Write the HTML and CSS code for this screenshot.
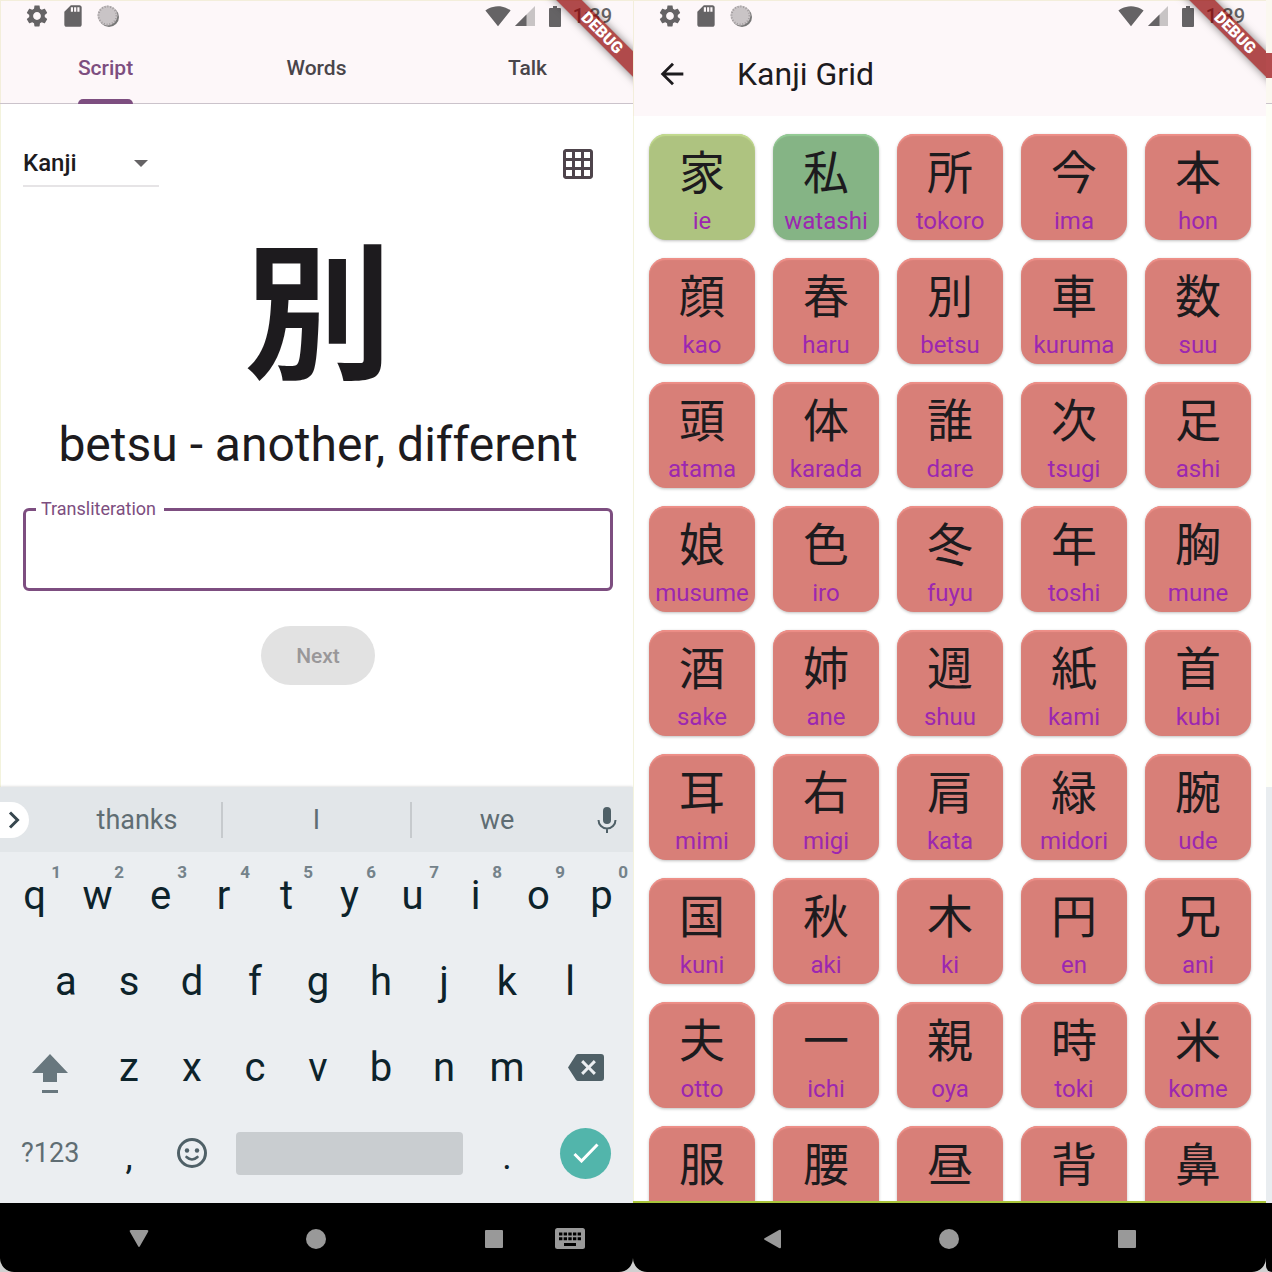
FILE: index.html
```html
<!DOCTYPE html>
<html lang="en">
<head>
<meta charset="utf-8">
<title>Kanji Practice</title>
<link rel="stylesheet" href="styles.css">
</head>
<body>
<svg class="sprite" aria-hidden="true">
  <symbol id="gear" viewBox="0 0 24 24"><path d="M19.14 12.94c.04-.3.06-.61.06-.94 0-.32-.02-.64-.07-.94l2.03-1.58c.18-.14.23-.41.12-.61l-1.92-3.32c-.12-.22-.37-.29-.59-.22l-2.39.96c-.5-.38-1.03-.7-1.62-.94l-.36-2.54c-.04-.24-.24-.41-.48-.41h-3.84c-.24 0-.43.17-.47.41l-.36 2.54c-.59.24-1.13.57-1.62.94l-2.39-.96c-.22-.08-.47 0-.59.22L2.74 8.87c-.12.21-.08.47.12.61l2.03 1.58c-.05.3-.09.63-.09.94s.02.64.07.94l-2.03 1.58c-.18.14-.23.41-.12.61l1.92 3.32c.12.22.37.29.59.22l2.39-.96c.5.38 1.03.7 1.62.94l.36 2.54c.05.24.24.41.48.41h3.84c.24 0 .44-.17.47-.41l.36-2.54c.59-.24 1.13-.56 1.62-.94l2.39.96c.22.08.47 0 .59-.22l1.92-3.32c.12-.22.07-.47-.12-.61l-2.01-1.58zM12 15.6c-1.98 0-3.6-1.62-3.6-3.6s1.620-3.6 3.6-3.6 3.6 1.620 3.6 3.6-1.62 3.6-3.6 3.6z"/></symbol>
  <symbol id="sd" viewBox="0 0 24 24"><path d="M18 2h-8L4 8v12c0 1.100.9 2 2 2h12c1.100 0 2-.9 2-2V4c0-1.100-.9-2-2-2zm-6 6h-2V4h2v4zm3 0h-2V4h2v4zm3 0h-2V4h2v4z"/></symbol>
  <symbol id="sync" viewBox="0 0 24 24"><circle cx="13" cy="13" r="10" fill="#777"/><circle cx="11.500" cy="11.500" r="10" fill="#c9c4c6"/><circle cx="11.500" cy="11.500" r="9" fill="none" stroke="#a09b9d" stroke-width="2" stroke-dasharray="1 1.800"/></symbol>
  <symbol id="wifi" viewBox="0 0 24 24"><path d="M12.010 21.490L23.640 7c-.45-.34-4.930-4-11.640-4C5.280 3 .81 6.660.36 7l11.630 14.490.010.010.010-.010z"/></symbol>
  <symbol id="signal" viewBox="0 0 20 20"><path opacity=".35" d="M20 0 0 20h20z"/><path d="M11.500 8.500 0 20h11.500z"/></symbol>
  <symbol id="battery" viewBox="0 0 12 21"><path d="M4 0h4v2h3q1 0 1 1v17q0 1-1 1H1q-1 0-1-1V3q0-1 1-1h3z"/></symbol>
  <symbol id="grid" viewBox="0 0 24 24"><path d="M20 2H4c-1.100 0-2 .9-2 2v16c0 1.100.9 2 2 2h16c1.100 0 2-.9 2-2V4c0-1.100-.9-2-2-2zM8 20H4v-4h4v4zm0-6H4v-4h4v4zm0-6H4V4h4v4zm6 12h-4v-4h4v4zm0-6h-4v-4h4v4zm0-6h-4V4h4v4zm6 12h-4v-4h4v4zm0-6h-4v-4h4v4zm0-6h-4V4h4v4z"/></symbol>
  <symbol id="back" viewBox="0 0 24 24"><path d="M20 11H7.830l5.590-5.590L12 4l-8 8 8 8 1.410-1.410L7.830 13H20v-2z"/></symbol>
  <symbol id="mic" viewBox="0 0 20 28"><rect x="6" y="1" width="8" height="17" rx="4"/><path d="M1.500 14a8.500 8.500 0 0 0 17 0M10 22v5" fill="none" stroke="currentColor" stroke-width="2"/></symbol>
  <symbol id="shift" viewBox="0 0 36 40"><path d="M18 0 0 19h11v9h14v-9h11zM10 36h16v3H10z"/></symbol>
  <symbol id="erase" viewBox="0 0 36 27"><path fill-rule="evenodd" d="M10 0h23q3 0 3 3v21q0 3-3 3H10q-1 0-2-1L0 13.500 8 1q1-1 2-1zm3.100 8.200 5.200 5.300-5.200 5.300 2.100 2.100 5.300-5.300 5.300 5.300 2.100-2.100-5.300-5.300 5.300-5.300-2.100-2.100-5.300 5.300-5.300-5.300z"/></symbol>
  <symbol id="smile" viewBox="0 0 30 30"><circle cx="15" cy="15" r="13.500" fill="none" stroke="currentColor" stroke-width="3"/><circle cx="10" cy="12.500" r="2.200"/><circle cx="20" cy="12.500" r="2.200"/><path d="M9.500 19q5.500 5 11 0" fill="none" stroke="currentColor" stroke-width="2.600" stroke-linecap="round"/></symbol>
  <symbol id="check" viewBox="0 0 26 20"><path d="M1.500 11 8.500 18 24.500 1.500" fill="none" stroke="#fff" stroke-width="3"/></symbol>
  <symbol id="chevron" viewBox="0 0 12 18"><path d="M2 1.500 9.500 9 2 16.500" fill="none" stroke="currentColor" stroke-width="3"/></symbol>
  <symbol id="nav-down" viewBox="0 0 20 18"><path d="M2 0h16q2 0 1 2l-8 14q-1 2-2 0L1 2Q0 0 2 0z"/></symbol>
  <symbol id="nav-back" viewBox="0 0 18 20"><path d="M18 2v16q0 2-2 1L2 11q-2-1 0-2L16 1q2-1 2 1z"/></symbol>
  <symbol id="nav-home" viewBox="0 0 20 20"><circle cx="10" cy="10" r="10"/></symbol>
  <symbol id="nav-recent" viewBox="0 0 18 18"><rect width="18" height="18" rx="1"/></symbol>
  <symbol id="nav-keys" viewBox="0 0 30 21"><rect width="30" height="21" rx="2.500"/><path d="M4 6h22M4 10.700h22" stroke="#000" stroke-width="3" stroke-dasharray="3.400 1.250"/><path d="M9 16.500h12" stroke="#000" stroke-width="3"/></symbol>
</svg>

<main class="screens">
  <section class="phone" aria-label="Script practice">
    <header class="app-top">
      <div class="status">
        <svg class="status-icon"><use href="#gear"/></svg>
        <svg class="status-icon"><use href="#sd"/></svg>
        <svg class="status-dot"><use href="#sync"/></svg>
        <span class="spacer"></span>
        <svg class="status-wifi"><use href="#wifi"/></svg>
        <svg class="status-signal"><use href="#signal"/></svg>
        <svg class="status-battery"><use href="#battery"/></svg>
        <span class="clock">1:39</span>
      </div>
      <nav class="tabs">
        <a class="tab tab-active" href="#script">Script</a>
        <a class="tab" href="#words">Words</a>
        <a class="tab" href="#talk">Talk</a>
      </nav>
    </header>
    <div class="ribbon">DEBUG</div>

    <div class="practice" id="script">
      <div class="toolbar">
        <div class="picker">
          <select class="picker-select" aria-label="Script type"><option>Kanji</option><option>Kana</option></select>
          <span class="picker-arrow"></span>
        </div>
        <button class="icon-button" aria-label="Show grid"><svg class="grid-icon"><use href="#grid"/></svg></button>
      </div>
      <div class="glyph" lang="ja">別</div>
      <p class="meaning">betsu - another, different</p>
      <div class="field">
        <input class="field-input" id="answer" type="text">
        <label class="field-label" for="answer">Transliteration</label>
      </div>
      <button class="next" disabled>Next</button>
    </div>

    <div class="keyboard">
      <div class="suggestions">
        <button class="expand" aria-label="More"><svg class="chevron"><use href="#chevron"/></svg></button>
        <button class="suggestion">thanks</button>
        <button class="suggestion">I</button>
        <button class="suggestion">we</button>
        <button class="mic" aria-label="Voice input"><svg class="mic-icon"><use href="#mic"/></svg></button>
      </div>
      <div class="keys">
        <div class="key-row">
          <button class="key">q<sup class="hint">1</sup></button><button class="key">w<sup class="hint">2</sup></button><button class="key">e<sup class="hint">3</sup></button><button class="key">r<sup class="hint">4</sup></button><button class="key">t<sup class="hint">5</sup></button><button class="key">y<sup class="hint">6</sup></button><button class="key">u<sup class="hint">7</sup></button><button class="key">i<sup class="hint">8</sup></button><button class="key">o<sup class="hint">9</sup></button><button class="key">p<sup class="hint">0</sup></button>
        </div>
        <div class="key-row key-row-inset">
          <button class="key">a</button><button class="key">s</button><button class="key">d</button><button class="key">f</button><button class="key">g</button><button class="key">h</button><button class="key">j</button><button class="key">k</button><button class="key">l</button>
        </div>
        <div class="key-row">
          <button class="key key-wide" aria-label="Shift"><svg class="shift-icon"><use href="#shift"/></svg></button>
          <button class="key">z</button><button class="key">x</button><button class="key">c</button><button class="key">v</button><button class="key">b</button><button class="key">n</button><button class="key">m</button>
          <button class="key key-wide key-muted" aria-label="Backspace"><svg class="erase-icon"><use href="#erase"/></svg></button>
        </div>
        <div class="key-row">
          <button class="key key-wide key-symbols">?123</button>
          <button class="key key-mark">,</button>
          <button class="key key-muted" aria-label="Emoji"><svg class="smile-icon"><use href="#smile"/></svg></button>
          <button class="key key-space" aria-label="Space"><span class="space-bar"></span></button>
          <button class="key key-mark">.</button>
          <button class="key key-wide" aria-label="Done"><span class="done"><svg class="check-icon"><use href="#check"/></svg></span></button>
        </div>
      </div>
    </div>

    <footer class="system-nav">
      <button class="nav-button nav-first" aria-label="Hide keyboard"><svg class="nav-down"><use href="#nav-down"/></svg></button>
      <button class="nav-button nav-second" aria-label="Home"><svg class="nav-home"><use href="#nav-home"/></svg></button>
      <button class="nav-button nav-third" aria-label="Recent apps"><svg class="nav-recent"><use href="#nav-recent"/></svg></button>
      <button class="nav-button nav-fourth" aria-label="Switch keyboard"><svg class="nav-keys"><use href="#nav-keys"/></svg></button>
    </footer>
  </section>

  <section class="phone" aria-label="Kanji grid">
    <header class="app-top app-top-plain">
      <div class="status">
        <svg class="status-icon"><use href="#gear"/></svg>
        <svg class="status-icon"><use href="#sd"/></svg>
        <svg class="status-dot"><use href="#sync"/></svg>
        <span class="spacer"></span>
        <svg class="status-wifi"><use href="#wifi"/></svg>
        <svg class="status-signal"><use href="#signal"/></svg>
        <svg class="status-battery"><use href="#battery"/></svg>
        <span class="clock">1:39</span>
      </div>
      <div class="title-bar">
        <button class="icon-button" aria-label="Back"><svg class="back-icon"><use href="#back"/></svg></button>
        <h1 class="title">Kanji Grid</h1>
      </div>
    </header>
    <div class="ribbon">DEBUG</div>

    <ul class="cards">
      <li class="card card-good"><span class="kanji" lang="ja">家</span><span class="romaji">ie</span></li>
      <li class="card card-best"><span class="kanji" lang="ja">私</span><span class="romaji">watashi</span></li>
      <li class="card"><span class="kanji" lang="ja">所</span><span class="romaji">tokoro</span></li>
      <li class="card"><span class="kanji" lang="ja">今</span><span class="romaji">ima</span></li>
      <li class="card"><span class="kanji" lang="ja">本</span><span class="romaji">hon</span></li>
      <li class="card"><span class="kanji" lang="ja">顔</span><span class="romaji">kao</span></li>
      <li class="card"><span class="kanji" lang="ja">春</span><span class="romaji">haru</span></li>
      <li class="card"><span class="kanji" lang="ja">別</span><span class="romaji">betsu</span></li>
      <li class="card"><span class="kanji" lang="ja">車</span><span class="romaji">kuruma</span></li>
      <li class="card"><span class="kanji" lang="ja">数</span><span class="romaji">suu</span></li>
      <li class="card"><span class="kanji" lang="ja">頭</span><span class="romaji">atama</span></li>
      <li class="card"><span class="kanji" lang="ja">体</span><span class="romaji">karada</span></li>
      <li class="card"><span class="kanji" lang="ja">誰</span><span class="romaji">dare</span></li>
      <li class="card"><span class="kanji" lang="ja">次</span><span class="romaji">tsugi</span></li>
      <li class="card"><span class="kanji" lang="ja">足</span><span class="romaji">ashi</span></li>
      <li class="card"><span class="kanji" lang="ja">娘</span><span class="romaji">musume</span></li>
      <li class="card"><span class="kanji" lang="ja">色</span><span class="romaji">iro</span></li>
      <li class="card"><span class="kanji" lang="ja">冬</span><span class="romaji">fuyu</span></li>
      <li class="card"><span class="kanji" lang="ja">年</span><span class="romaji">toshi</span></li>
      <li class="card"><span class="kanji" lang="ja">胸</span><span class="romaji">mune</span></li>
      <li class="card"><span class="kanji" lang="ja">酒</span><span class="romaji">sake</span></li>
      <li class="card"><span class="kanji" lang="ja">姉</span><span class="romaji">ane</span></li>
      <li class="card"><span class="kanji" lang="ja">週</span><span class="romaji">shuu</span></li>
      <li class="card"><span class="kanji" lang="ja">紙</span><span class="romaji">kami</span></li>
      <li class="card"><span class="kanji" lang="ja">首</span><span class="romaji">kubi</span></li>
      <li class="card"><span class="kanji" lang="ja">耳</span><span class="romaji">mimi</span></li>
      <li class="card"><span class="kanji" lang="ja">右</span><span class="romaji">migi</span></li>
      <li class="card"><span class="kanji" lang="ja">肩</span><span class="romaji">kata</span></li>
      <li class="card"><span class="kanji" lang="ja">緑</span><span class="romaji">midori</span></li>
      <li class="card"><span class="kanji" lang="ja">腕</span><span class="romaji">ude</span></li>
      <li class="card"><span class="kanji" lang="ja">国</span><span class="romaji">kuni</span></li>
      <li class="card"><span class="kanji" lang="ja">秋</span><span class="romaji">aki</span></li>
      <li class="card"><span class="kanji" lang="ja">木</span><span class="romaji">ki</span></li>
      <li class="card"><span class="kanji" lang="ja">円</span><span class="romaji">en</span></li>
      <li class="card"><span class="kanji" lang="ja">兄</span><span class="romaji">ani</span></li>
      <li class="card"><span class="kanji" lang="ja">夫</span><span class="romaji">otto</span></li>
      <li class="card"><span class="kanji" lang="ja">一</span><span class="romaji">ichi</span></li>
      <li class="card"><span class="kanji" lang="ja">親</span><span class="romaji">oya</span></li>
      <li class="card"><span class="kanji" lang="ja">時</span><span class="romaji">toki</span></li>
      <li class="card"><span class="kanji" lang="ja">米</span><span class="romaji">kome</span></li>
      <li class="card"><span class="kanji" lang="ja">服</span></li>
      <li class="card"><span class="kanji" lang="ja">腰</span></li>
      <li class="card"><span class="kanji" lang="ja">昼</span></li>
      <li class="card"><span class="kanji" lang="ja">背</span></li>
      <li class="card"><span class="kanji" lang="ja">鼻</span></li>
    </ul>

    <footer class="system-nav">
      <button class="nav-button nav-first" aria-label="Back"><svg class="nav-back"><use href="#nav-back"/></svg></button>
      <button class="nav-button nav-second" aria-label="Home"><svg class="nav-home"><use href="#nav-home"/></svg></button>
      <button class="nav-button nav-third" aria-label="Recent apps"><svg class="nav-recent"><use href="#nav-recent"/></svg></button>
    </footer>
  </section>

  <div class="edge" aria-hidden="true">
    <div class="edge-top"><span class="edge-ribbon"></span></div>
    <div class="edge-body"></div>
    <div class="edge-keys"></div>
    <div class="edge-nav"></div>
  </div>
</main>
</body>
</html>
```

FILE: styles.css
```css
* { box-sizing: border-box; }

body {
  margin: 0;
  background: #d0d0d0;
  color: #1d1b1e;
  font-family: Roboto, "Noto Sans CJK JP", sans-serif;
}

button {
  padding: 0;
  border: 0;
  background: none;
  color: inherit;
  font: inherit;
}

svg { display: block; fill: currentColor; }

.sprite { position: absolute; width: 0; height: 0; }

.screens {
  display: grid;
  grid-template-columns: minmax(0, 1fr) minmax(0, 1fr) 6px;
  height: 100vh;
}

.phone {
  position: relative;
  display: flex;
  flex-direction: column;
  min-height: 0;
  overflow: hidden;
  background: #fff;
  border-radius: 0 0 14px 14px;
  box-shadow: inset 1px 0 #f3f3dd;
}

/* Status bar */
.app-top {
  background: #fdf7f9;
  border-bottom: 1px solid #cbc3cb;
  box-shadow: inset 1px 1px #f3eedb;
}

.app-top-plain { border-bottom: 0; }

.status {
  display: flex;
  align-items: center;
  height: 32px;
  padding: 0 21px 0 24px;
  color: #656365;
}

.status-icon { width: 26px; height: 26px; margin-right: 10px; }
.status-dot { width: 24px; height: 24px; }
.spacer { flex: 1; }
.status-wifi { width: 26px; height: 26px; margin-right: 4px; }
.status-signal { width: 20px; height: 20px; margin-right: 14px; }
.status-battery { width: 12px; height: 21px; margin-right: 12px; }

.clock {
  font-size: 20px;
  line-height: 32px;
  font-weight: 500;
}

/* Debug ribbon across the corner */
.ribbon {
  position: absolute;
  top: 24px;
  right: -49px;
  width: 160px;
  height: 18px;
  background: rgba(143, 0, 2, .7);
  box-shadow: 0 0 9px rgba(0, 0, 0, .5);
  color: #fff;
  font-size: 16px;
  line-height: 18px;
  font-weight: 900;
  text-align: center;
  transform: rotate(45deg);
}

/* Tabs */
.tabs {
  display: grid;
  grid-template-columns: repeat(3, 1fr);
  justify-items: center;
}

.tab {
  height: 71px;
  padding-top: 22px;
  color: #49454a;
  font-size: 21px;
  line-height: 28px;
  font-weight: 500;
  text-decoration: none;
}

.tab-active {
  position: relative;
  color: #7d4e80;
}

.tab-active::after {
  content: "";
  position: absolute;
  right: 0;
  bottom: -1px;
  left: 0;
  height: 5px;
  border-radius: 5px 5px 0 0;
  background: #7d4e80;
}

/* Practice area */
.practice {
  display: flex;
  flex: 1;
  flex-direction: column;
  align-items: center;
  min-height: 0;
  padding: 36px 20px 0 23px;
}

.toolbar {
  display: flex;
  align-self: stretch;
  justify-content: space-between;
  align-items: center;
  height: 47px;
}

.picker {
  position: relative;
  width: 136px;
  border-bottom: 2px solid #e6e4e6;
}

.picker-select {
  width: 100%;
  height: 45px;
  padding: 1px 0 0;
  border: 0;
  appearance: none;
  background: none;
  color: #1d1b1e;
  font: 500 24px/44px Roboto, sans-serif;
}

.picker-arrow {
  position: absolute;
  top: 20px;
  right: 11px;
  border: 7px solid transparent;
  border-top-color: #656365;
  border-bottom: 0;
}

.icon-button { display: flex; color: #1d1b1e; }

.grid-icon {
  width: 36px;
  height: 36px;
  margin-right: 17px;
  color: #4e444b;
}

.glyph {
  margin-top: 18px;
  font-family: "Noto Sans CJK JP", sans-serif;
  font-size: 148px;
  line-height: 196px;
  font-weight: 700;
}

.meaning {
  margin: 14px 0 0;
  font-size: 48px;
  line-height: 60px;
  white-space: nowrap;
}

.field {
  position: relative;
  align-self: stretch;
  margin-top: 33px;
}

.field-input {
  display: block;
  width: 100%;
  height: 83px;
  padding: 0 20px;
  border: 3px solid #7d4e80;
  border-radius: 6px;
  outline: 0;
  background: none;
  font: 24px Roboto, sans-serif;
}

.field-label {
  position: absolute;
  top: -10px;
  left: 13px;
  padding: 0 8px 0 5px;
  background: #fff;
  color: #7d4e80;
  font-size: 18px;
  line-height: 22px;
}

.next {
  width: 114px;
  height: 59px;
  margin-top: 35px;
  border-radius: 30px;
  background: #e2e2e2;
  color: #999799;
  font-size: 21px;
  font-weight: 500;
}

/* Keyboard */
.keyboard {
  position: relative;
  background: #ebeef1;
  box-shadow: 0 0 3px rgba(0, 0, 0, .2);
  color: #0d232b;
}

.suggestions {
  display: grid;
  grid-template-columns: 53px 9fr 10fr 9fr 51px;
  align-items: center;
  height: 65px;
  background: #e2e6e9;
  color: #5f6d73;
}

.expand {
  display: flex;
  align-items: center;
  width: 29px;
  height: 36px;
  padding-left: 8px;
  border-radius: 0 18px 18px 0;
  background: #fff;
  color: #37474f;
}

.chevron { width: 12px; height: 18px; }

.suggestion {
  height: 36px;
  border-right: 2px solid #c6cacd;
  font-size: 27px;
  line-height: 36px;
}

.suggestion:nth-of-type(4) { border-right: 0; }

.mic { justify-self: center; color: #4f6067; }
.mic-icon { width: 20px; height: 28px; }

.keys { padding: 0 0 7px 3px; }

.key-row { display: flex; height: 86px; }
.key-row-inset { padding: 0 5%; }

.key {
  position: relative;
  display: flex;
  flex: 2 1 0;
  justify-content: center;
  align-items: center;
  min-width: 0;
  font-size: 40px;
}

.key-wide { flex-grow: 3; }
.key-space { flex-grow: 8; }
.key-muted { color: #4f6067; }
.key-symbols { color: #5f6d73; font-size: 27px; }
.key-mark { padding-top: 8px; font-size: 36px; }

.hint {
  position: absolute;
  top: 10px;
  right: 5px;
  color: #74828a;
  font-size: 17px;
  line-height: 20px;
  font-weight: 700;
}

.shift-icon { width: 36px; height: 40px; margin-top: 14px; color: #68777e; }
.erase-icon { width: 36px; height: 27px; }
.smile-icon { width: 30px; height: 30px; }

.space-bar {
  width: 90%;
  height: 43px;
  border-radius: 4px;
  background: #c9cdd0;
}

.done {
  display: flex;
  justify-content: center;
  align-items: center;
  width: 51px;
  height: 51px;
  border-radius: 50%;
  background: #52b5ab;
}

.check-icon { width: 26px; height: 20px; }

/* System navigation */
.system-nav {
  position: relative;
  display: grid;
  flex: none;
  grid-template-columns: 8% 28% 28% 7% 14% 10% 1fr;
  height: 69px;
  padding-top: 2px;
  background: #000;
  color: #999;
}

.nav-button {
  display: flex;
  justify-content: center;
  align-items: center;
}

.nav-first { grid-column: 2; }
.nav-second { grid-column: 3; }
.nav-third { grid-column: 5; }
.nav-fourth { grid-column: 6; }

.nav-down { width: 20px; height: 18px; }
.nav-back { width: 18px; height: 20px; }
.nav-home { width: 20px; height: 20px; }
.nav-recent { width: 18px; height: 18px; }
.nav-keys { width: 30px; height: 21px; }

/* Kanji grid */
.title-bar {
  display: flex;
  align-items: center;
  height: 84px;
  padding-left: 22px;
}

.back-icon { width: 34px; height: 34px; }

.title {
  margin: 0 0 0 48px;
  font-size: 32px;
  line-height: 40px;
  font-weight: 400;
}

.cards {
  display: grid;
  flex: 1;
  grid-template-columns: repeat(5, minmax(0, 1fr));
  align-content: start;
  gap: 18px;
  min-height: 0;
  margin: 0;
  padding: 18px 15px 0 16px;
  overflow: hidden;
  border-bottom: 2px solid #a8c43a;
  list-style: none;
}

.card {
  display: flex;
  flex-direction: column;
  align-items: center;
  aspect-ratio: 1;
  padding-top: 9px;
  border-radius: 17px;
  background: #d87f78;
  box-shadow: 0 1px 3px rgba(0, 0, 0, .25), inset 0 2px 1px #ee8f88;
}

.card-good {
  background: #aec380;
  box-shadow: 0 1px 3px rgba(0, 0, 0, .25), inset 0 2px 1px #c2da8e;
}

.card-best {
  background: #85b485;
  box-shadow: 0 1px 3px rgba(0, 0, 0, .25), inset 0 2px 1px #94cb95;
}

.kanji {
  font-family: "Noto Sans CJK JP", sans-serif;
  font-size: 46px;
  line-height: 52px;
}

.romaji {
  margin-top: 12px;
  color: #9c27b0;
  font-size: 24px;
  line-height: 28px;
}

/* Start of the following screen */
.edge {
  display: flex;
  flex-direction: column;
  overflow: hidden;
  background: #d0d0d0;
}

.edge-top {
  height: 104px;
  padding-top: 53px;
  border-bottom: 1px solid #cbc3cb;
  background: #fbf8f0;
}

.edge-ribbon { display: block; height: 25px; background: #b44b4d; }
.edge-body { flex: 1; background: #fdfef6; }
.edge-keys { height: 416px; background: #e9edf0; }

.edge-nav {
  height: 69px;
  border-radius: 0 0 0 14px;
  background: #000;
}
```
